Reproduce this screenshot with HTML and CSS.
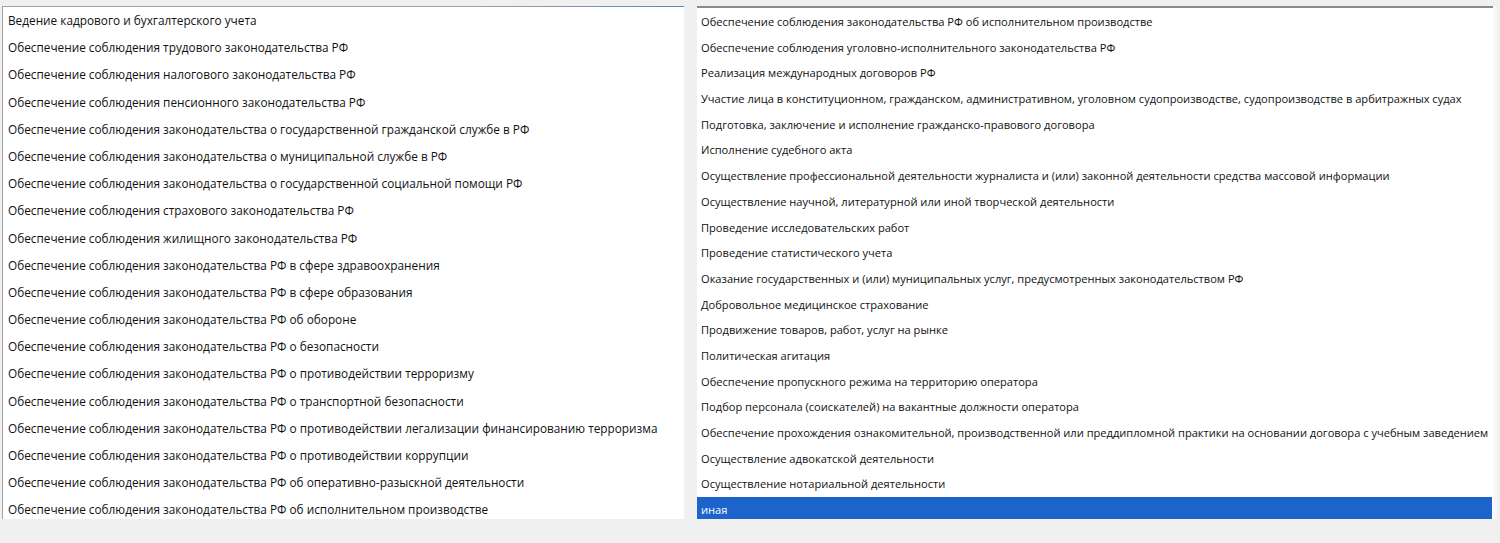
FILE: index.html
```html
<!DOCTYPE html>
<html>
<head>
<meta charset="utf-8">
<link rel="stylesheet" href="styles.css">
</head>
<body>
<div class="page">
  <ul class="list list-left">
    <li>Ведение кадрового и бухгалтерского учета</li>
    <li>Обеспечение соблюдения трудового законодательства РФ</li>
    <li>Обеспечение соблюдения налогового законодательства РФ</li>
    <li>Обеспечение соблюдения пенсионного законодательства РФ</li>
    <li>Обеспечение соблюдения законодательства о государственной гражданской службе в РФ</li>
    <li>Обеспечение соблюдения законодательства о муниципальной службе в РФ</li>
    <li>Обеспечение соблюдения законодательства о государственной социальной помощи РФ</li>
    <li>Обеспечение соблюдения страхового законодательства РФ</li>
    <li>Обеспечение соблюдения жилищного законодательства РФ</li>
    <li>Обеспечение соблюдения законодательства РФ в сфере здравоохранения</li>
    <li>Обеспечение соблюдения законодательства РФ в сфере образования</li>
    <li>Обеспечение соблюдения законодательства РФ об обороне</li>
    <li>Обеспечение соблюдения законодательства РФ о безопасности</li>
    <li>Обеспечение соблюдения законодательства РФ о противодействии терроризму</li>
    <li>Обеспечение соблюдения законодательства РФ о транспортной безопасности</li>
    <li>Обеспечение соблюдения законодательства РФ о противодействии легализации финансированию терроризма</li>
    <li>Обеспечение соблюдения законодательства РФ о противодействии коррупции</li>
    <li>Обеспечение соблюдения законодательства РФ об оперативно-разыскной деятельности</li>
    <li>Обеспечение соблюдения законодательства РФ об исполнительном производстве</li>
  </ul>
  <ul class="list list-right">
    <li>Обеспечение соблюдения законодательства РФ об исполнительном производстве</li>
    <li>Обеспечение соблюдения уголовно-исполнительного законодательства РФ</li>
    <li>Реализация международных договоров РФ</li>
    <li>Участие лица в конституционном, гражданском, административном, уголовном судопроизводстве, судопроизводстве в арбитражных судах</li>
    <li>Подготовка, заключение и исполнение гражданско-правового договора</li>
    <li>Исполнение судебного акта</li>
    <li>Осуществление профессиональной деятельности журналиста и (или) законной деятельности средства массовой информации</li>
    <li>Осуществление научной, литературной или иной творческой деятельности</li>
    <li>Проведение исследовательских работ</li>
    <li>Проведение статистического учета</li>
    <li>Оказание государственных и (или) муниципальных услуг, предусмотренных законодательством РФ</li>
    <li>Добровольное медицинское страхование</li>
    <li>Продвижение товаров, работ, услуг на рынке</li>
    <li>Политическая агитация</li>
    <li>Обеспечение пропускного режима на территорию оператора</li>
    <li>Подбор персонала (соискателей) на вакантные должности оператора</li>
    <li>Обеспечение прохождения ознакомительной, производственной или преддипломной практики на основании договора с учебным заведением</li>
    <li>Осуществление адвокатской деятельности</li>
    <li>Осуществление нотариальной деятельности</li>
    <li class="selected">иная</li>
  </ul>
  <div class="edge"></div>
</div>
</body>
</html>
```

FILE: styles.css
```css
html, body {
  margin: 0;
  padding: 0;
  background: #f0f0f0;
  width: 1500px;
  height: 543px;
  overflow: hidden;
}
.page {
  display: flex;
  align-items: flex-start;
  padding-top: 6px;
}
.list {
  list-style: none;
  margin: 0;
  padding: 0;
  background: #ffffff;
  height: 513px;
  overflow: hidden;
  box-sizing: border-box;
  font-family: "Open Sans", "Noto Sans", sans-serif;
  color: #111;
  white-space: nowrap;
}
.list-left {
  margin-left: 2px;
  width: 682px;
  border-left: 1px solid #a8a8a8;
  border-top: 1px solid #a0a0a0;
  border-image: linear-gradient(to right, #a0a0a0 0%, #a0a0a0 70%, #5b86c4 100%) 1;
  border-right: 0;
  border-bottom: 0;
  font-size: 11.8px;
}
.list-left li {
  height: 27.2px;
  line-height: 27.2px;
  padding-left: 5px;
}
.list-right {
  margin-left: 13px;
  width: 796px;
  border-top: 2px solid #8a8a8a;
  font-size: 11.1px;
  padding-top: 1px;
}
.list-right li {
  height: 25.7px;
  line-height: 25.7px;
  padding-left: 4px;
}
.list-right li.selected {
  background: #1c64cc;
  color: #ffffff;
  margin-right: 1px;
}
.edge {
  width: 4px;
  height: 513px;
  background: #f8f8f8;
}
```
